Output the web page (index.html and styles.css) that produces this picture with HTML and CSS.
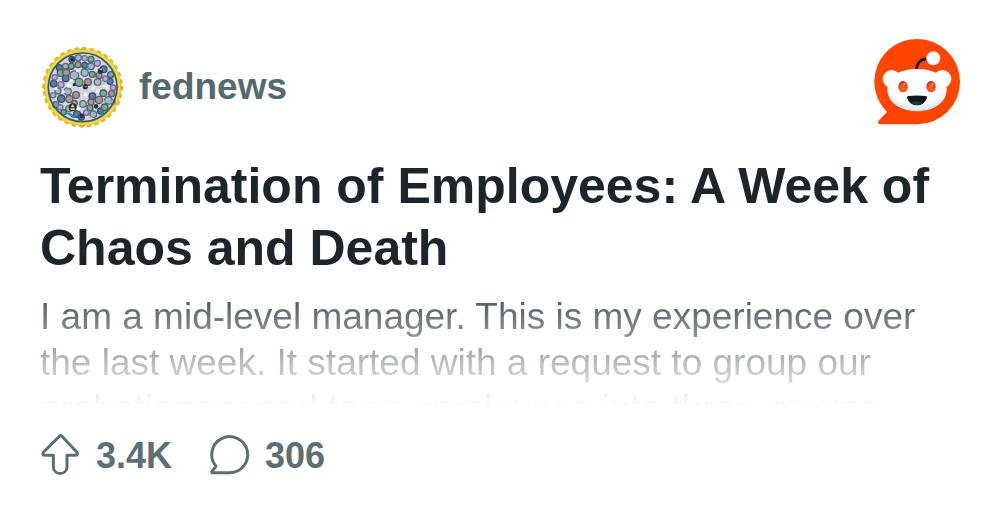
FILE: index.html
```
<!DOCTYPE html>
<html lang="en">
  <head>
    <meta charset="UTF-8">
    <title>Termination of Employees: A Week of Chaos and Death</title>
    <link rel="stylesheet" href="styles.css">
  </head>

  <body>
    <article class="card">
      <header class="header">
        <div class="community">
          <svg class="avatar" viewBox="0 0 252 252" aria-hidden="true">
            <circle cx="128" cy="127" r="116" fill="#ecc935"/>
            <circle cx="128" cy="127" r="117" fill="none" stroke="#e3bb2c" stroke-width="8" stroke-linecap="round" stroke-dasharray="7 16"/>
            <circle cx="128" cy="127" r="110" fill="none" stroke="#f3dc55" stroke-width="4"/>
            <path d="M120 14l8-9 8 9zM120 240l8 9 8-9zM15 119l-9 8 9 8zM241 119l9 8-9 8z" fill="#dcae20"/>
            <circle cx="128" cy="127" r="103" fill="#d3d3e2"/>
            <!-- agency seals -->
            <g stroke-width="4">
              <g fill="#5f7ba0" stroke="#35506f">
                <circle cx="96" cy="43" r="9"/><circle cx="134" cy="61" r="9"/><circle cx="58" cy="68" r="9"/><circle cx="191" cy="73" r="10"/>
                <circle cx="77" cy="100" r="10"/><circle cx="210" cy="109" r="9"/><circle cx="41" cy="116" r="10"/><circle cx="157" cy="154" r="10"/>
                <circle cx="64" cy="161" r="11"/><circle cx="111" cy="207" r="10"/><circle cx="182" cy="198" r="9"/><circle cx="124" cy="216" r="9"/>
              </g>
              <g fill="#a4b8c2" stroke="#566f80">
                <circle cx="115" cy="38" r="9"/><circle cx="153" cy="64" r="10"/><circle cx="77" cy="64" r="9"/><circle cx="134" cy="83" r="11"/>
                <circle cx="103" cy="91" r="13"/><circle cx="173" cy="111" r="10"/><circle cx="83" cy="139" r="11"/><circle cx="205" cy="166" r="11"/>
                <circle cx="129" cy="177" r="10"/><circle cx="86" cy="191" r="9"/><circle cx="160" cy="208" r="10"/><circle cx="54" cy="138" r="9"/>
              </g>
              <g fill="#7fa79b" stroke="#41655e">
                <circle cx="153" cy="43" r="9"/><circle cx="94" cy="64" r="9"/><circle cx="62" cy="84" r="10"/><circle cx="212" cy="89" r="9"/>
                <circle cx="157" cy="88" r="9"/><circle cx="117" cy="112" r="12"/><circle cx="190" cy="145" r="10"/><circle cx="47" cy="179" r="9"/>
                <circle cx="150" cy="188" r="9"/><circle cx="71" cy="202" r="8"/><circle cx="194" cy="187" r="10"/>
              </g>
              <g fill="#a39a99" stroke="#655b62">
                <circle cx="114" cy="59" r="9"/><circle cx="79" cy="82" r="10"/><circle cx="177" cy="92" r="9"/><circle cx="144" cy="111" r="10"/>
                <circle cx="88" cy="162" r="11"/><circle cx="108" cy="150" r="10"/><circle cx="177" cy="165" r="11"/><circle cx="153" cy="171" r="9"/>
                <circle cx="215" cy="146" r="9"/><circle cx="104" cy="174" r="8"/>
              </g>
              <g fill="#b5afd4" stroke="#756da0">
                <circle cx="134" cy="40" r="8"/><circle cx="172" cy="55" r="9"/><circle cx="44" cy="97" r="8"/><circle cx="196" cy="101" r="8"/>
                <circle cx="63" cy="119" r="9"/><circle cx="219" cy="128" r="8"/><circle cx="39" cy="151" r="8"/><circle cx="139" cy="203" r="8"/>
                <circle cx="218" cy="171" r="7"/><circle cx="61" cy="187" r="8"/>
              </g>
            </g>
            <g fill="#223348">
              <circle cx="97" cy="43" r="6"/><circle cx="181" cy="78" r="8"/><circle cx="98" cy="187" r="12"/><circle cx="168" cy="184" r="7"/>
              <circle cx="136" cy="125" r="8"/><circle cx="103" cy="119" r="5"/><circle cx="125" cy="213" r="7"/>
            </g>
            <g fill="#eef0f4">
              <circle cx="95" cy="107" r="5"/><circle cx="112" cy="77" r="4"/><circle cx="192" cy="120" r="7"/><circle cx="116" cy="191" r="6"/>
              <circle cx="70" cy="140" r="5"/><circle cx="137" cy="149" r="6"/><circle cx="174" cy="137" r="6"/><circle cx="203" cy="128" r="5"/>
              <circle cx="166" cy="74" r="5"/><circle cx="87" cy="121" r="8"/><circle cx="48" cy="131" r="5"/><circle cx="160" cy="128" r="6"/>
            </g>
            <path d="M98 177l6 10h-12zM92 190h12v5h-12z" fill="#dddf48"/>
            <path d="M79 134l8-7 4 6zM132 123l12 0-7 6z" fill="#bd527c"/>
            <path d="M182 121l11-9 5 5zM188 169l22-6 8 7-10 6z" fill="#8ec1a7"/>
            <path d="M76 202l16 2 15 12-8 4zM178 202l18-3-11 11z" fill="#387eaa"/>
            <path d="M178 73l7-4 2 8zM144 218l8-6 7 8z" fill="#d8be43"/>
            <circle cx="128" cy="127" r="103" fill="none" stroke="#315d70" stroke-width="5"/>
          </svg>
          <span class="community__name">fednews</span>
        </div>

        <svg class="logo" viewBox="0 0 258 258" role="img" aria-label="Reddit">
          <defs>
            <radialGradient id="face" cx="50%" cy="35%" r="68%">
              <stop offset="70%" stop-color="#fff"/>
              <stop offset="90%" stop-color="#dce8ef"/>
              <stop offset="100%" stop-color="#a8bfca"/>
            </radialGradient>
            <radialGradient id="ball" cx="45%" cy="35%" r="65%">
              <stop offset="70%" stop-color="#fff"/>
              <stop offset="100%" stop-color="#d3e0e7"/>
            </radialGradient>
            <radialGradient id="eye" cx="50%" cy="65%" r="60%">
              <stop offset="0%" stop-color="#ff6b22"/>
              <stop offset="70%" stop-color="#f54414"/>
              <stop offset="100%" stop-color="#b72d12"/>
            </radialGradient>
          </defs>
          <path d="M130 0a128 128 0 0 1 0 256H19c-7 0-9-7-4-12l24-25A128 128 0 0 1 130 0z" fill="#ff4500"/>
          <circle cx="53" cy="120" r="27" fill="#fff"/>
          <circle cx="205" cy="120" r="27" fill="#fff"/>
          <path d="M128 90c0-18 13-30 32-31" fill="none" stroke="#14191b" stroke-width="8" stroke-linecap="round"/>
          <path d="M129 90c54 0 89 23 89 61 0 40-39 66-89 66s-89-26-89-66c0-38 35-61 89-61z" fill="url(#face)"/>
          <circle cx="178" cy="58" r="21" fill="url(#ball)"/>
          <ellipse cx="87" cy="143" rx="14" ry="17" fill="url(#eye)"/>
          <ellipse cx="171" cy="143" rx="14" ry="17" fill="url(#eye)"/>
          <circle cx="91" cy="136" r="3" fill="#ffb99b"/>
          <circle cx="175" cy="136" r="3" fill="#ffb99b"/>
          <path d="M103 171q26-3 52 0 5 0 4 5c-5 15-16 23-30 23s-25-8-30-23q-1-5 4-5z" fill="#10181b"/>
          <path d="M110 191q19-7 38 0-8 7-19 7t-19-7z" fill="#1f3833"/>
        </svg>
      </header>

      <h1 class="title">Termination of Employees: A Week of Chaos and Death</h1>
      <p class="text">I am a mid-level manager. This is my experience over the last week. It started with a request to group our probationary and term employees into three groups.</p>

      <footer class="stats">
        <div class="stat">
          <svg class="stat__icon" viewBox="0 0 120 126" aria-hidden="true">
            <path d="M59 9L11 57c-5 5-2 10 4 10h25v34c0 27 41 27 41 0V67h25c6 0 9-5 4-10L65 9q-3-3-6 0z"/>
          </svg>
          <span>3.4K</span>
        </div>
        <div class="stat">
          <svg class="stat__icon" viewBox="0 0 120 126" aria-hidden="true">
            <path d="M62 119H10c-2 0-3-2-1-4l12-15A54 54 0 1 1 62 119z"/>
          </svg>
          <span>306</span>
        </div>
      </footer>
    </article>
  </body>
</html>
```
FILE: styles.css
```
* {
  box-sizing: border-box;
}
body {
  margin: 0;
  background: #fff;
  font-family: "Liberation Sans", Arial, sans-serif;
}
.card {
  padding: 39px 40px;
}

.header {
  display: flex;
  align-items: flex-start;
  justify-content: space-between;
}
.community {
  display: flex;
  align-items: center;
  gap: 15px;
  padding-top: 6px;
}
.community__name {
  color: #576970;
  font-size: 37px;
  font-weight: bold;
}
.avatar {
  width: 84px;
  height: 84px;
}
.logo {
  width: 86px;
  height: 86px;
}

.title {
  margin: 26px 0 0;
  color: #1c2529;
  font-size: 50px;
  line-height: 62px;
}

/* the last line is cut off and fades into the page */
.text {
  height: 112px;
  margin: 15px 0 0;
  overflow: hidden;
  background: linear-gradient(#475358, #fff);
  background-clip: text;
  -webkit-background-clip: text;
  color: transparent;
  font-size: 37px;
  line-height: 46px;
}

.stats {
  display: flex;
  gap: 37px;
  margin-top: 27px;
}
.stat {
  display: flex;
  align-items: flex-start;
  gap: 16px;
  color: #5c6f75;
  font-size: 36px;
  line-height: 46px;
  font-weight: bold;
}
.stat__icon {
  width: 40px;
  height: 42px;
  fill: none;
  stroke: currentColor;
  stroke-width: 9px;
  stroke-linejoin: round;
  overflow: visible;
}
```
